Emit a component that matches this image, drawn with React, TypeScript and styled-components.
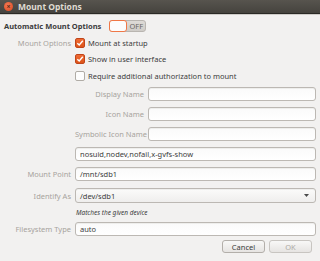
import React, { useState } from "react";
import styled, { createGlobalStyle } from "styled-components";

const Global = createGlobalStyle`
  html, body { margin: 0; padding: 0; background: #f2f1f0; }
  * { box-sizing: border-box; }
  body { font-family: "Noto Sans", "DejaVu Sans", sans-serif; font-size: 7.5px; color: #3c3c3c; }
`;

const Window = styled.div`
  width: 320px;
  height: 261px;
  background: #f2f1f0;
  display: flex;
  flex-direction: column;
  overflow: hidden;
`;

const TitleBar = styled.div`
  height: 14px;
  display: flex;
  align-items: center;
  gap: 5px;
  padding-left: 4px;
  background: linear-gradient(#57544e, #45433e);
  border-bottom: 1px solid #2a2925;
  box-shadow: 0 1px 0 #cfcdc9;
  color: #dfdbd2;
  font-weight: bold;
  font-size: 8.5px;
`;

const CloseButton = styled.div`
  width: 9px;
  height: 9px;
  border-radius: 50%;
  background: radial-gradient(circle at 40% 35%, #f57a55, #d9461d);
  display: flex;
  align-items: center;
  justify-content: center;
  color: #5a2a18;
  font-size: 7px;
  line-height: 1;
`;

const Body = styled.div`
  flex: 1;
  padding: 5px 4px 0 4px;
  display: flex;
  flex-direction: column;
`;

const HeaderRow = styled.div`
  display: flex;
  align-items: center;
  gap: 8px;
  height: 14px;
`;

const Heading = styled.div`
  font-weight: bold;
  font-size: 7.5px;
  color: #3c3c3c;
`;

const Switch = styled.div`
  width: 37px;
  height: 12px;
  border: 1px solid #b9b5b0;
  border-radius: 3px;
  background: linear-gradient(#dedbd7, #cfccc8);
  display: flex;
  align-items: center;
`;

const Knob = styled.div`
  width: 18px;
  height: 12px;
  margin: -1px 0 0 -1px;
  border: 1px solid #f07746;
  border-radius: 3px;
  background: #fcfcfc;
`;

const SwitchText = styled.span`
  flex: 1;
  text-align: center;
  color: #6a6864;
  font-size: 7.5px;
`;

const Form = styled.div`
  display: grid;
  grid-template-columns: 67px 1fr;
  column-gap: 4px;
  margin-top: 3px;
  align-items: center;
`;

const Label = styled.div<{ $top?: boolean }>`
  text-align: right;
  color: #a7a39d;
  white-space: nowrap;
  align-self: ${(p) => (p.$top ? "start" : "center")};
  padding-top: ${(p) => (p.$top ? "2px" : "0")};
`;

const CheckList = styled.div`
  display: flex;
  flex-direction: column;
  gap: 5.5px;
  padding-top: 1px;
`;

const CheckRow = styled.label`
  display: flex;
  align-items: center;
  gap: 3px;
  height: 11px;
  color: #3c3c3c;
`;

const Box = styled.span<{ $checked?: boolean }>`
  width: 10px;
  height: 10px;
  border-radius: 2px;
  display: flex;
  align-items: center;
  justify-content: center;
  border: 1px solid ${(p) => (p.$checked ? "#c0451a" : "#b0aca6")};
  background: ${(p) => (p.$checked ? "linear-gradient(#ee6a34, #dd5418)" : "#fdfdfd")};
`;

const Nested = styled.div`
  display: grid;
  grid-template-columns: 69px 1fr;
  column-gap: 4px;
  row-gap: 6px;
  align-items: center;
  margin-top: 6px;
`;

const Entry = styled.div<{ $gap?: number }>`
  height: 14px;
  margin-top: ${(p) => p.$gap ?? 0}px;
  border: 1px solid #bcb8b3;
  border-radius: 3px;
  background: linear-gradient(#fafafa, #ffffff);
  box-shadow: inset 0 1px 0 #eeeeec;
  display: flex;
  align-items: center;
  padding-left: 4px;
  color: #3c3c3c;
  white-space: nowrap;
  overflow: hidden;
`;

const Combo = styled(Entry)`
  height: 15px;
  justify-content: space-between;
  padding-right: 6px;
  background: linear-gradient(#fbfbfa, #efeeed);
`;

const RowLabel = styled(Label)<{ $gap?: number }>`
  margin-top: ${(p) => p.$gap ?? 0}px;
`;

const Hint = styled.div`
  font-style: italic;
  font-size: 6.5px;
  color: #3c3c3c;
  height: 19px;
  display: flex;
  align-items: center;
  padding-left: 1px;
`;

const Buttons = styled.div`
  display: flex;
  justify-content: flex-end;
  gap: 4px;
  margin-top: 4px;
  padding-right: 4px;
`;

const Button = styled.div<{ $disabled?: boolean }>`
  width: 43px;
  height: 13px;
  border: 1px solid ${(p) => (p.$disabled ? "#c8c5c1" : "#b3afaa")};
  border-radius: 3px;
  background: linear-gradient(#f8f8f7, #e6e4e2);
  display: flex;
  align-items: center;
  justify-content: center;
  color: ${(p) => (p.$disabled ? "#aeaaa5" : "#3c3c3c")};
`;

const Check = () => (
  <svg width="8" height="8" viewBox="0 0 8 8">
    <path d="M1.3 4.2 L3.2 6 L6.8 1.8" fill="none" stroke="#fff" strokeWidth="1.4" />
  </svg>
);

const Arrow = () => (
  <svg width="5" height="3" viewBox="0 0 5 3">
    <path d="M0 0 H5 L2.5 3 Z" fill="#4a4a4a" />
  </svg>
);

export default function App() {
  const [opts] = useState({ startup: true, ui: true, auth: false });
  return (
    <Window>
      <Global />
      <TitleBar>
        <CloseButton>×</CloseButton>
        <span>Mount Options</span>
      </TitleBar>
      <Body>
        <HeaderRow>
          <Heading>Automatic Mount Options</Heading>
          <Switch>
            <Knob />
            <SwitchText>OFF</SwitchText>
          </Switch>
        </HeaderRow>
        <Form>
          <Label $top>Mount Options</Label>
          <CheckList>
            <CheckRow>
              <Box $checked={opts.startup}>{opts.startup && <Check />}</Box>
              Mount at startup
            </CheckRow>
            <CheckRow>
              <Box $checked={opts.ui}>{opts.ui && <Check />}</Box>
              Show in user interface
            </CheckRow>
            <CheckRow>
              <Box $checked={opts.auth}>{opts.auth && <Check />}</Box>
              Require additional authorization to mount
            </CheckRow>
          </CheckList>
          <div />
          <Nested>
            <Label>Display Name</Label>
            <Entry />
            <Label>Icon Name</Label>
            <Entry />
            <Label>Symbolic Icon Name</Label>
            <Entry />
          </Nested>
          <div />
          <Entry $gap={6}>nosuid,nodev,nofail,x-gvfs-show</Entry>
          <RowLabel $gap={6}>Mount Point</RowLabel>
          <Entry $gap={6}>/mnt/sdb1</Entry>
          <RowLabel $gap={7}>Identify As</RowLabel>
          <Combo $gap={7}>
            /dev/sdb1
            <Arrow />
          </Combo>
          <div />
          <Hint>Matches the given device</Hint>
          <Label>Filesystem Type</Label>
          <Entry>auto</Entry>
        </Form>
        <Buttons>
          <Button>Cancel</Button>
          <Button $disabled>OK</Button>
        </Buttons>
      </Body>
    </Window>
  );
}
